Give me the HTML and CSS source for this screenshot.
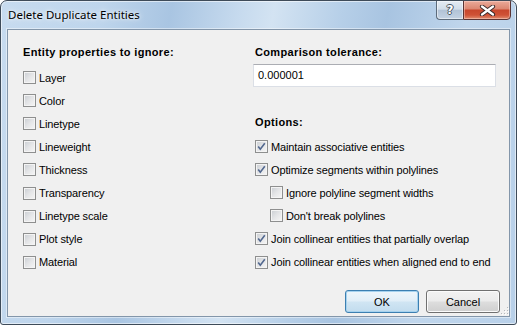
FILE: index.html
```html
<!DOCTYPE html>
<html lang="en">

<head>
    <meta charset="UTF-8">
    <meta name="viewport" content="width=device-width, initial-scale=1.0">
    <title>Delete Duplicate Entities</title>
    <link rel="stylesheet" href="styles.css">
</head>

<body>
    <div class="window">
        <!-- Title bar -->
        <div class="titlebar">
            <span class="title">Delete Duplicate Entities</span>
            <div class="caption-buttons">
                <div class="cap cap-help">?</div>
                <div class="cap cap-close">
                    <svg width="17" height="11" viewBox="0 0 17 11">
                        <path d="M3 1.5 L14 9.5 M14 1.5 L3 9.5" stroke="#3a2a2a" stroke-width="4.2" stroke-linecap="round" fill="none"/>
                        <path d="M3 1.5 L14 9.5 M14 1.5 L3 9.5" stroke="#ffffff" stroke-width="2.2" stroke-linecap="round" fill="none"/>
                    </svg>
                </div>
            </div>
        </div>

        <!-- Dialog body -->
        <div class="client">
            <div class="columns">
                <div class="col col-left">
                    <h2 class="group-title">Entity properties to ignore:</h2>
                    <ul class="checklist">
                        <li class="check"><span class="box"></span>Layer</li>
                        <li class="check"><span class="box"></span>Color</li>
                        <li class="check"><span class="box"></span>Linetype</li>
                        <li class="check"><span class="box"></span>Lineweight</li>
                        <li class="check"><span class="box"></span>Thickness</li>
                        <li class="check"><span class="box"></span>Transparency</li>
                        <li class="check"><span class="box"></span>Linetype scale</li>
                        <li class="check"><span class="box"></span>Plot style</li>
                        <li class="check"><span class="box"></span>Material</li>
                    </ul>
                </div>

                <div class="col col-right">
                    <h2 class="group-title">Comparison tolerance:</h2>
                    <div class="textbox">0.000001</div>

                    <h2 class="group-title options-title">Options:</h2>
                    <ul class="checklist checklist-right">
                        <li class="check"><span class="box checked"><svg width="11" height="11" viewBox="0 0 11 11"><path d="M2.2 5.4 L4.3 8.2 L8.8 2.2" stroke="#52688f" stroke-width="1.6" fill="none"/></svg></span>Maintain associative entities</li>
                        <li class="check"><span class="box checked"><svg width="11" height="11" viewBox="0 0 11 11"><path d="M2.2 5.4 L4.3 8.2 L8.8 2.2" stroke="#52688f" stroke-width="1.6" fill="none"/></svg></span>Optimize segments within polylines</li>
                        <li class="check sub"><span class="box"></span>Ignore polyline segment widths</li>
                        <li class="check sub"><span class="box"></span>Don't break polylines</li>
                        <li class="check"><span class="box checked"><svg width="11" height="11" viewBox="0 0 11 11"><path d="M2.2 5.4 L4.3 8.2 L8.8 2.2" stroke="#52688f" stroke-width="1.6" fill="none"/></svg></span>Join collinear entities that partially overlap</li>
                        <li class="check"><span class="box checked"><svg width="11" height="11" viewBox="0 0 11 11"><path d="M2.2 5.4 L4.3 8.2 L8.8 2.2" stroke="#52688f" stroke-width="1.6" fill="none"/></svg></span>Join collinear entities when aligned end to end</li>
                    </ul>
                </div>
            </div>

            <!-- OK / Cancel -->
            <div class="actions">
                <button class="btn btn-default">OK</button>
                <button class="btn">Cancel</button>
            </div>

            <svg class="grip" width="9" height="9" viewBox="0 0 9 9">
                <rect x="7" y="1" width="1" height="1" fill="#b5b8bc"/>
                <rect x="4" y="4" width="1" height="1" fill="#b5b8bc"/>
                <rect x="7" y="4" width="1" height="1" fill="#b5b8bc"/>
                <rect x="1" y="7" width="1" height="1" fill="#b5b8bc"/>
                <rect x="4" y="7" width="1" height="1" fill="#b5b8bc"/>
                <rect x="7" y="7" width="1" height="1" fill="#b5b8bc"/>
                <rect x="8" y="2" width="1" height="1" fill="#ffffff"/>
                <rect x="5" y="5" width="1" height="1" fill="#ffffff"/>
                <rect x="8" y="5" width="1" height="1" fill="#ffffff"/>
                <rect x="2" y="8" width="1" height="1" fill="#ffffff"/>
                <rect x="5" y="8" width="1" height="1" fill="#ffffff"/>
                <rect x="8" y="8" width="1" height="1" fill="#ffffff"/>
            </svg>
        </div>
    </div>
</body>

</html>
```

FILE: styles.css
```css
body {
    margin: 0;
    background-color: #fff;
    font-family: "Liberation Sans", Arial, sans-serif;
    font-size: 11px;
    color: #000;
}

/* Window frame (Aero glass) */
.window {
    width: 517px;
    height: 325px;
    box-sizing: border-box;
    border: 1px solid #3e4b59;
    border-radius: 7px 7px 3px 3px;
    background: linear-gradient(100deg, #c7dbef 0%, #bed5ec 18%, #a9c5e2 30%, #c6daee 42%, #d3e3f2 48%, #b6cfe8 60%, #a8c4e1 68%, #c0d6ec 82%, #b8d0e9 100%);
    box-shadow: inset 0 0 0 1px rgba(255, 255, 255, 0.55);
    display: flex;
    flex-direction: column;
    overflow: hidden;
}

.titlebar {
    height: 28px;
    flex: none;
    display: flex;
    justify-content: space-between;
    align-items: flex-start;
    padding-left: 7px;
}

.title {
    font-family: "Noto Sans", "Open Sans", sans-serif;
    font-size: 11.5px;
    line-height: 16px;
    margin-top: 6px;
    color: #000;
    text-shadow: 0 0 6px rgba(255, 255, 255, 0.9), 0 0 3px rgba(255, 255, 255, 0.8);
}

.caption-buttons {
    display: flex;
    margin-top: -1px;
    margin-right: 5px;
}

.cap {
    height: 20px;
    box-sizing: border-box;
    display: flex;
    align-items: center;
    justify-content: center;
}

.cap-help {
    width: 27px;
    border: 1px solid #5c6b7b;
    border-right: none;
    border-radius: 0 0 0 4px;
    background: linear-gradient(#e4ebf3 0%, #d2deea 45%, #b2c3d6 52%, #c4d3e3 100%);
    box-shadow: inset 0 0 0 1px rgba(255, 255, 255, 0.5);
    font-family: "DejaVu Sans", sans-serif;
    font-weight: bold;
    font-size: 12px;
    color: #fff;
    text-shadow: 1px 0 0 #4a5561, -1px 0 0 #4a5561, 0 1px 0 #4a5561, 0 -1px 0 #4a5561;
}

.cap-close {
    width: 48px;
    border: 1px solid #5a3434;
    border-radius: 0 0 4px 0;
    background: linear-gradient(#eaaa9a 0%, #dc8873 42%, #c8472d 52%, #cf5236 78%, #e08d70 100%);
    box-shadow: inset 0 0 0 1px rgba(255, 220, 210, 0.45);
}

/* Client area */
.client {
    flex: 1;
    margin: 0 6px 7px 6px;
    border: 1px solid #8396aa;
    box-shadow: 0 0 0 1px rgba(255, 255, 255, 0.45);
    background-color: #f0f0f0;
    display: flex;
    flex-direction: column;
    position: relative;
}

.columns {
    display: flex;
    padding: 16px 0 0 15px;
}

.col-left {
    width: 232px;
}

.col-right {
    width: 245px;
}

.group-title {
    margin: 0;
    font-size: 11px;
    font-weight: bold;
    line-height: 13px;
    letter-spacing: 0.35px;
}

.options-title {
    margin-top: 29px;
}

.checklist {
    list-style: none;
    margin: 7px 0 0 0;
    padding: 0;
}

.checklist-right {
    margin-top: 6px;
}

.check {
    height: 23.1px;
    display: flex;
    align-items: center;
    white-space: nowrap;
    letter-spacing: -0.12px;
}

.check.sub {
    padding-left: 15px;
}

/* Checkbox */
.box {
    width: 13px;
    height: 13px;
    flex: none;
    box-sizing: border-box;
    margin-right: 3px;
    border: 1px solid #8e8f8f;
    background: linear-gradient(135deg, #c9cdd2 0%, #e4e5e7 50%, #f6f6f6 100%);
    box-shadow: inset 0 0 0 1px #f4f4f4;
}

.box svg {
    display: block;
}

/* Text field */
.textbox {
    margin: 5px 0 0 -2px;
    width: 243px;
    height: 23px;
    box-sizing: border-box;
    border: 1px solid #dbdfe6;
    border-top-color: #abadb3;
    background-color: #fff;
    padding-left: 4px;
    line-height: 21px;
}

/* Buttons */
.actions {
    margin-top: auto;
    display: flex;
    justify-content: flex-end;
    gap: 7px;
    padding: 0 9px 3px 0;
}

.btn {
    width: 74px;
    height: 23px;
    box-sizing: border-box;
    font-family: "Liberation Sans", Arial, sans-serif;
    font-size: 11px;
    color: #000;
    border: 1px solid #707070;
    border-radius: 3px;
    background: linear-gradient(#f2f2f2 0%, #ebebeb 48%, #dddddd 52%, #cfcfcf 100%);
    box-shadow: inset 0 0 0 1px #fbfbfb;
    padding: 0;
}

.btn-default {
    border-color: #3c7fb1;
    background: linear-gradient(#eef6fb 0%, #e1eef7 48%, #d0e5f3 52%, #c2dcee 100%);
    box-shadow: inset 0 0 0 1px #a6d2ee;
}

.grip {
    position: absolute;
    right: 0;
    bottom: 1px;
}
```
